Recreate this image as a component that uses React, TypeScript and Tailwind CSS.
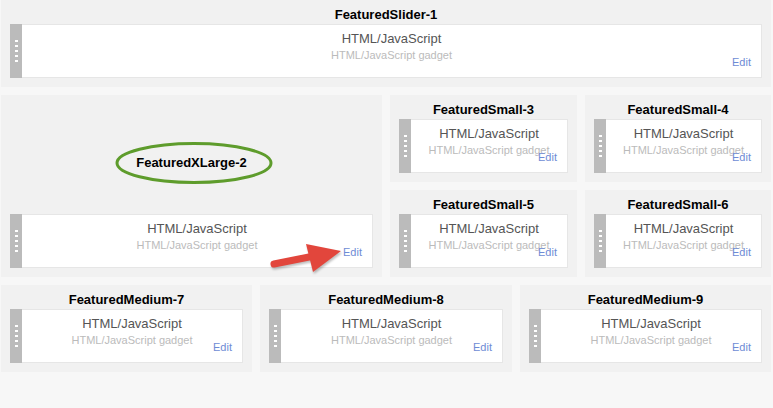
import React from 'react';

const Handle = () => (
  <div className="flex w-[12px] shrink-0 flex-col items-center justify-center gap-[3px] bg-[#bbbbbb]">
    {[0, 1, 2, 3, 4].map(i => (
      <span key={i} className="block h-[2px] w-[3px] bg-white" />
    ))}
  </div>
);

const Gadget = () => (
  <div className="flex h-[54px]">
    <Handle />
    <div className="relative flex-1 border border-l-0 border-[#e6e6e6] bg-white pt-[6px] text-center">
      <div className="text-[13px] leading-[15px] text-[#555555]">HTML/JavaScript</div>
      <div className="mt-[3px] text-[11px] leading-[13px] text-[#bbbbbb]">HTML/JavaScript gadget</div>
      <span className="absolute right-[10px] bottom-[8px] text-[11px] leading-[13px] text-[#6e8bd5]">Edit</span>
    </div>
  </div>
);

const Section = ({ title, className = '' }: { title: string; className?: string }) => (
  <div className={`flex h-[87px] flex-col bg-[#f1f1f1] px-[9px] pt-[7px] ${className}`}>
    <div className="text-center text-[13px] font-bold leading-[15px] text-black">{title}</div>
    <div className="mt-[2px]">
      <Gadget />
    </div>
  </div>
);

export default function App() {
  return (
    <div className="min-h-screen bg-[#f7f7f7] font-['Liberation_Sans',Arial,sans-serif]">
      <div className="relative flex h-[408px] w-[773px] flex-col gap-[8px] pl-[1px] pr-[2px]">
        <Section title="FeaturedSlider-1" />

        <div className="grid grid-cols-[381px_187px_186px] gap-[8px]">
          <div className="row-span-2 flex h-[182px] flex-col bg-[#f1f1f1] px-[9px] pt-[60px]">
            <div className="text-center text-[13px] font-bold leading-[15px] text-black">FeaturedXLarge-2</div>
            <div className="mt-auto mb-[9px]">
              <Gadget />
            </div>
          </div>
          <Section title="FeaturedSmall-3" />
          <Section title="FeaturedSmall-4" />
          <Section title="FeaturedSmall-5" />
          <Section title="FeaturedSmall-6" />
        </div>

        <div className="grid grid-cols-[251px_252px_251px] gap-[8px]">
          <Section title="FeaturedMedium-7" />
          <Section title="FeaturedMedium-8" />
          <Section title="FeaturedMedium-9" />
        </div>

        {/* annotation: green ring round the XLarge title */}
        <svg className="pointer-events-none absolute left-[114px] top-[141px]" width="160" height="44" viewBox="0 0 160 44">
          <ellipse cx="80" cy="22" rx="77" ry="19.5" fill="none" stroke="#5e9c2c" strokeWidth="3" />
        </svg>

        {/* annotation: red arrow pointing at Edit */}
        <svg className="pointer-events-none absolute left-[262px] top-[238px] drop-shadow-[1px_2px_1px_rgba(0,0,0,0.25)]" width="84" height="40" viewBox="0 0 84 40">
          <line x1="12" y1="26" x2="52" y2="18" stroke="#e2463c" strokeWidth="7" strokeLinecap="round" />
          <polygon points="44,6 79,13 51,34" fill="#e2463c" />
        </svg>
      </div>
    </div>
  );
}
